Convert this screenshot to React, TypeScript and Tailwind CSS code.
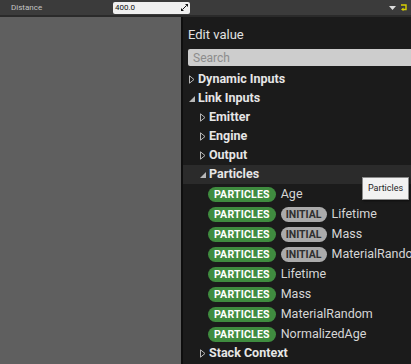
const font = { fontFamily: 'Roboto, "Noto Sans", sans-serif' }

function Collapsed() {
  return (
    <svg width="6" height="9" viewBox="0 0 6 9" className="flex-shrink-0">
      <path d="M0.5 0.8 L5 4.5 L0.5 8.2 Z" fill="none" stroke="#b8b8b8" strokeWidth="1" />
    </svg>
  )
}

function Expanded() {
  return (
    <svg width="6" height="9" viewBox="0 0 6 9" className="flex-shrink-0">
      <path d="M6 2 L6 8 L0 8 Z" fill="#b8b8b8" />
    </svg>
  )
}

function Branch({ label, open, level, highlight }: { label: string; open?: boolean; level: number; highlight?: boolean }) {
  return (
    <div className={`h-[19px] flex items-center gap-[3px] ${highlight ? 'bg-[#2b2b2b]' : ''}`} style={{ paddingLeft: 6 + level * 11 }}>
      {open ? <Expanded /> : <Collapsed />}
      <span className="text-[12.5px] font-bold text-[#e6e6e6] leading-none whitespace-nowrap">{label}</span>
    </div>
  )
}

function Leaf({ label, initial }: { label: string; initial?: boolean }) {
  return (
    <div className="h-[20px] flex items-center pl-[25px] gap-[5px] whitespace-nowrap">
      <span className="h-[15px] px-[6px] rounded-full bg-[#3f8c3f] text-white text-[10.5px] font-bold leading-[15px] tracking-[0.2px]">
        PARTICLES
      </span>
      {initial && (
        <span className="h-[15px] px-[5px] rounded-full bg-[#ababab] text-[#2f2f2f] text-[10.5px] font-bold leading-[15px]">
          INITIAL
        </span>
      )}
      <span className="text-[12.5px] text-[#d6d6d6] leading-none">{label}</span>
    </div>
  )
}

export default function App() {
  return (
    <div className="w-[411px] h-[364px] overflow-hidden bg-[#5f5f5f] flex flex-col relative" style={font}>
      <div className="h-[15px] bg-[#3b3b3b] flex items-center flex-shrink-0">
        <span className="ml-[11px] text-[8px] text-[#c4c4c4] w-[102px]">Distance</span>
        <div className="w-[77px] h-[12px] bg-[#f0f0f0] rounded-[2px] flex items-center justify-between px-[2px]">
          <span className="text-[8px] text-[#111]">400.0</span>
          <svg width="7" height="7" viewBox="0 0 7 7">
            <path d="M4 0 H7 V3 Z M0 7 V4 L3 7 Z" fill="#111" />
            <path d="M5.5 1.5 L1.5 5.5" stroke="#111" strokeWidth="1" />
          </svg>
        </div>
        <div className="ml-auto mr-[4px] flex items-center gap-[5px]">
          <svg width="7" height="4" viewBox="0 0 7 4">
            <path d="M0 0 H7 L3.5 4 Z" fill="#dcdcdc" />
          </svg>
          <svg width="6" height="7" viewBox="0 0 6 7">
            <path d="M0 1 H5 V5.5 H1.5" fill="none" stroke="#d8d000" strokeWidth="1.4" />
            <path d="M0 5.5 L2.5 3.5 V7 Z" fill="#d8d000" />
          </svg>
        </div>
      </div>
      <div className="h-[2px] bg-[#2a2a2a] flex-shrink-0" />
      <div className="flex flex-1 min-h-0">
        <div className="w-[181px] flex-shrink-0" />
        <div className="w-[2px] flex-shrink-0 bg-[#0e0e0e]" />
        <div className="flex-1 min-w-0 overflow-hidden bg-[#1b1b1b] flex flex-col">
          <div className="pl-[5px] pt-[9px] h-[27px] flex-shrink-0 text-[13px] leading-[18px] text-[#e2e2e2]">Edit value</div>
          <div className="ml-[5px] mt-[5px] h-[17px] flex-shrink-0 bg-[#cdcdcd] rounded-l-[2px] flex items-center pl-[5px] text-[12px] text-[#8c8c8c]">
            Search
          </div>
          <div className="h-[4px] flex-shrink-0" />
          <Branch label="Dynamic Inputs" level={0} />
          <Branch label="Link Inputs" level={0} open />
          <Branch label="Emitter" level={1} />
          <Branch label="Engine" level={1} />
          <Branch label="Output" level={1} />
          <Branch label="Particles" level={1} open highlight />
          <Leaf label="Age" />
          <Leaf label="Lifetime" initial />
          <Leaf label="Mass" initial />
          <Leaf label="MaterialRandom" initial />
          <Leaf label="Lifetime" />
          <Leaf label="Mass" />
          <Leaf label="MaterialRandom" />
          <Leaf label="NormalizedAge" />
          <Branch label="Stack Context" level={1} />
        </div>
      </div>
      <div className="absolute left-[362px] top-[177px] w-[47px] h-[23px] bg-[#f2f2f2] border border-[#8a8a8a] shadow-[1px_1px_2px_rgba(0,0,0,0.5)] flex items-center justify-center text-[9px] text-[#1e1e1e]">
        Particles
      </div>
    </div>
  )
}
